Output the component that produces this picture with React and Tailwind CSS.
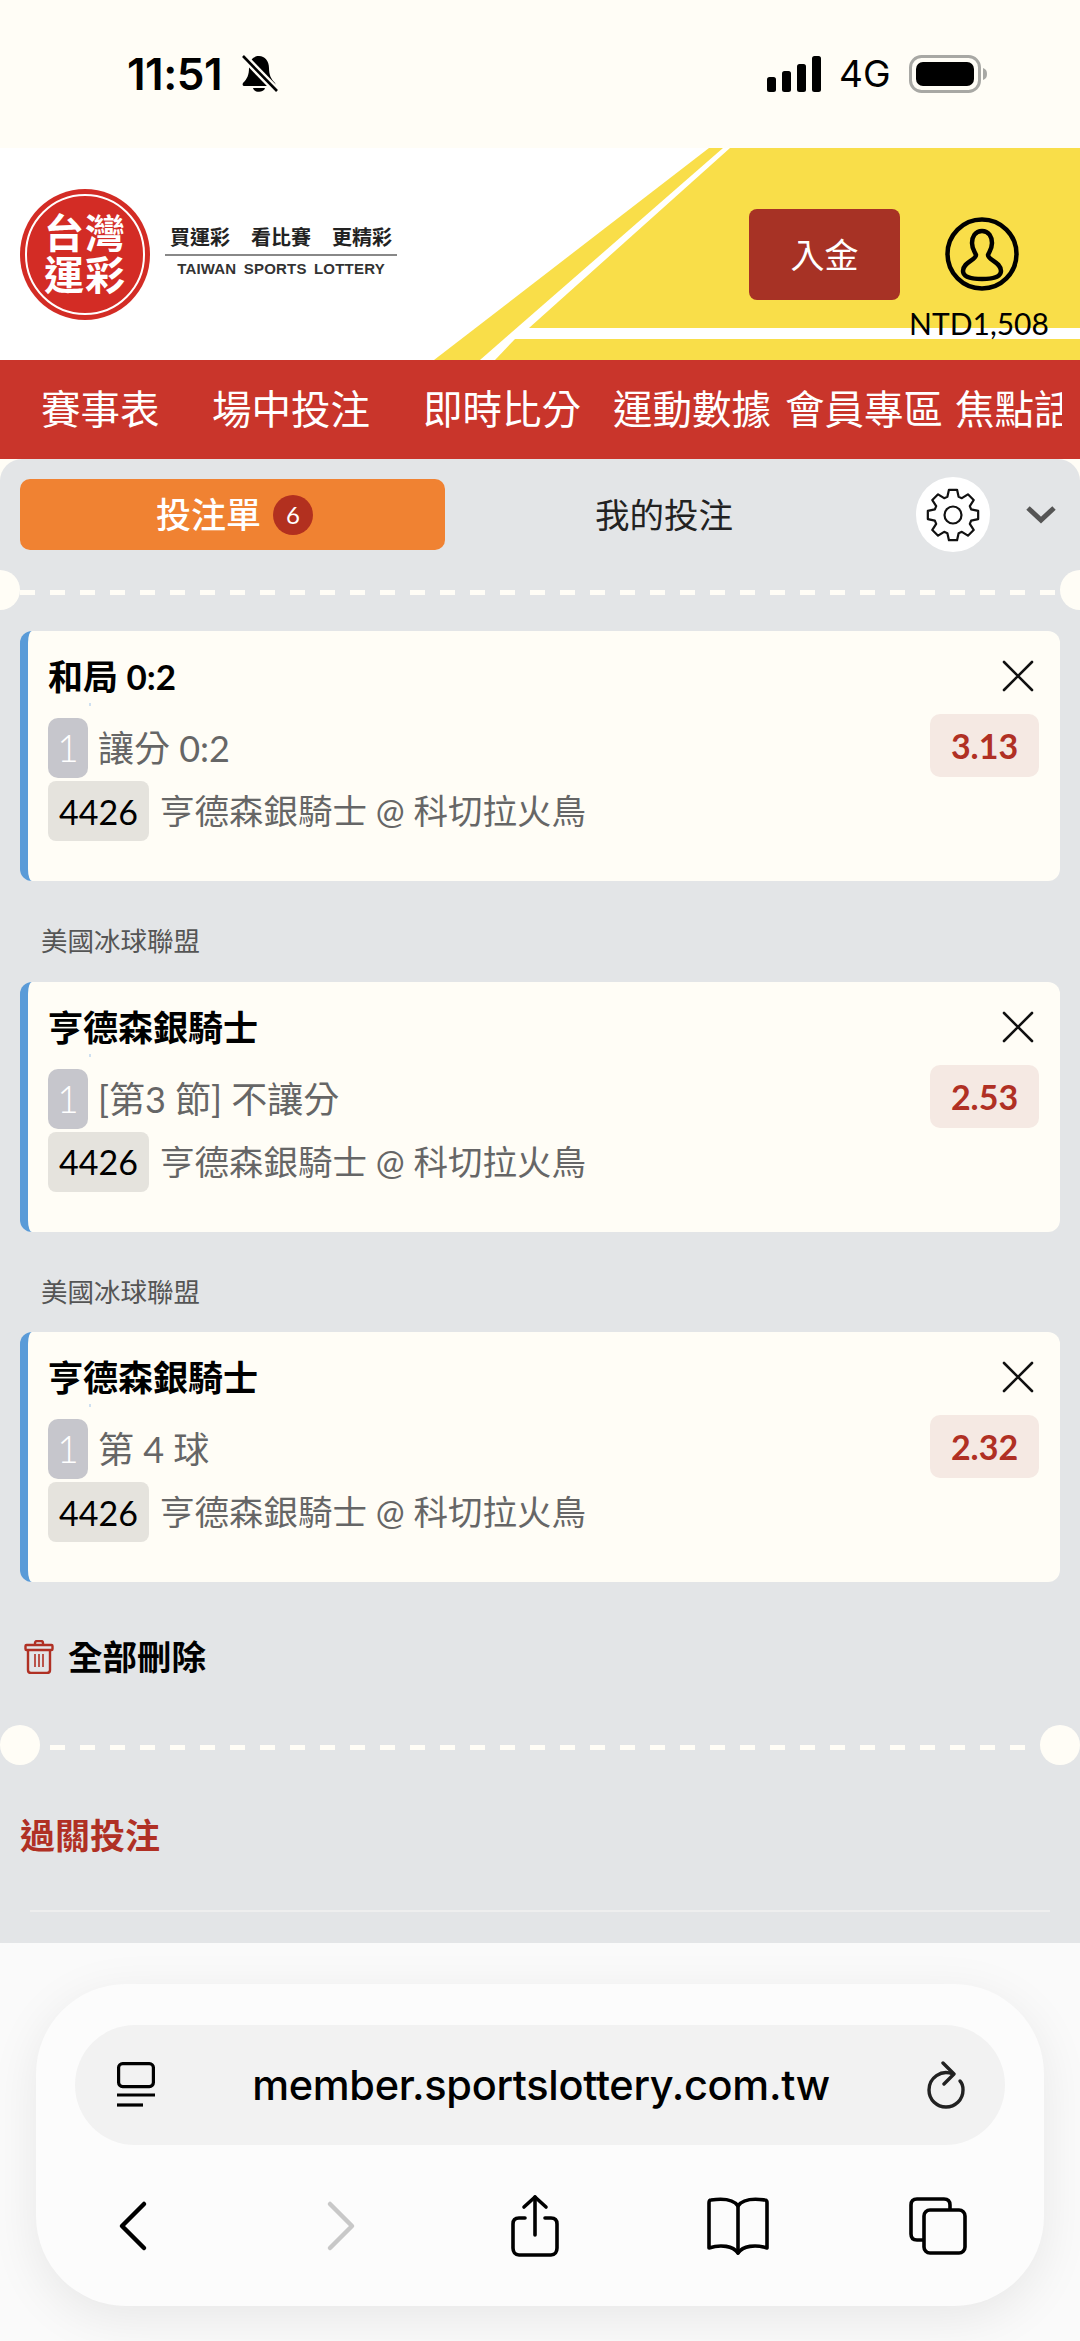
import React from 'react';

const legs = [
  { title: '和局 0:2', market: '讓分 0:2', odds: '3.13' },
  { title: '亨德森銀騎士', market: '[第3 節] 不讓分', odds: '2.53', league: '美國冰球聯盟' },
  { title: '亨德森銀騎士', market: '第 4 球', odds: '2.32', league: '美國冰球聯盟' },
];

// 8 tooth cog outline around the centre of a 60 box
const gearPath = () => {
  const pts = [];
  for (let i = 0; i < 8; i++) {
    const a = (i * Math.PI) / 4 - Math.PI / 2;
    [[-0.3, 19], [-0.16, 25.5], [0.16, 25.5], [0.3, 19]].forEach(([off, r]) => {
      pts.push(`${(30 + r * Math.cos(a + off)).toFixed(2)} ${(30 + r * Math.sin(a + off)).toFixed(2)}`);
    });
  }
  return `M${pts.join(' L')}Z`;
};

const GearIcon = () => (
  <svg width="60" height="60" viewBox="0 0 60 60" fill="none" stroke="#111" strokeWidth="2.2" strokeLinejoin="round">
    <path d={gearPath()} />
    <circle cx="30" cy="30" r="8.5" />
  </svg>
);

const CloseIcon = () => (
  <svg width="32" height="32" viewBox="0 0 32 32" fill="none" stroke="#111" strokeWidth="2.6" strokeLinecap="round">
    <path d="M2 2 L30 30 M30 2 L2 30" />
  </svg>
);

const LegCard = ({ title, market, odds }) => (
  <div className="relative h-[250px] mx-[20px] bg-[#fffdf6] rounded-[12px] border-l-[8px] border-[#5a9bd8] pl-[20px] pr-[21px] pt-[23px]">
    <div className="flex items-center justify-between h-[44px]">
      <span className="text-[35px] leading-[44px] font-bold text-black">{title}</span>
      <span className="mr-[5px]"><CloseIcon /></span>
    </div>
    <div className="absolute left-[61px] top-[72px] w-[2px] h-[3px] bg-[#cfe0f0]" />
    <div className="flex items-end justify-between h-[64px] mt-[16px]">
      <div className="flex items-center">
        <span className="w-[40px] h-[60px] rounded-[10px] bg-[#c6c6cc] text-white text-[37px] font-light flex items-center justify-center">1</span>
        <span className="ml-[10px] text-[36px] leading-[60px] text-[#666]">{market}</span>
      </div>
      <span className="w-[109px] h-[63px] mb-[1px] rounded-[10px] bg-[#f5e9e3] text-[#b03024] text-[34px] font-bold flex items-center justify-center">{odds}</span>
    </div>
    <div className="flex items-center mt-[3px]">
      <span className="w-[101px] h-[60px] rounded-[8px] bg-[#e5e3dd] text-black text-[34px] flex items-center justify-center">4426</span>
      <span className="ml-[11px] text-[34.5px] leading-[60px] text-[#666]">亨德森銀騎士 @ 科切拉火鳥</span>
    </div>
  </div>
);

const Divider = ({ full }) => (
  <div className="relative h-[40px]">
    <div className={full
      ? 'absolute left-[50px] right-[50px] top-[20px] h-[5px] bg-[repeating-linear-gradient(90deg,#fffdf6_0_15px,transparent_15px_30px)]'
      : 'absolute left-[20px] right-[20px] top-[20px] h-[5px] bg-[repeating-linear-gradient(90deg,#fffdf6_0_15px,transparent_15px_30px)]'} />
    <div className={full ? 'absolute left-0 top-0 w-[40px] h-[40px] rounded-full bg-[#fffdf6]' : 'absolute left-[-20px] top-0 w-[40px] h-[40px] rounded-full bg-[#fffdf6]'} />
    <div className={full ? 'absolute right-0 top-0 w-[40px] h-[40px] rounded-full bg-[#fffdf6]' : 'absolute right-[-20px] top-0 w-[40px] h-[40px] rounded-full bg-[#fffdf6]'} />
  </div>
);

const StatusBar = () => (
  <div className="h-[148px] bg-[#fffdf6] flex items-center font-['Inter',sans-serif]">
    <span className="ml-[127px] w-[102px] text-[44px] font-semibold tracking-[-0.5px] text-black whitespace-nowrap">11:51</span>
    <svg className="ml-[11px]" width="38" height="38" viewBox="0 0 38 38">
      <path d="M19 1 C13 1 9 6 9 13 C9 20 7 24 3 28 C2 30 3 31 5 31 L33 31 C35 31 36 30 35 28 C31 24 29 20 29 13 C29 6 25 1 19 1Z" fill="#000" />
      <path d="M13 33 C14 38 24 38 25 33Z" fill="#000" />
      <path d="M3 1 L37 36" stroke="#fffdf6" strokeWidth="7.5" />
      <path d="M3 1 L37 36" stroke="#000" strokeWidth="2.6" />
    </svg>
    <svg className="ml-[489px]" width="54" height="36" viewBox="0 0 54 36" fill="#000">
      <rect x="0" y="21" width="9" height="15" rx="2.5" />
      <rect x="15" y="15" width="9" height="21" rx="2.5" />
      <rect x="30" y="8" width="9" height="28" rx="2.5" />
      <rect x="45" y="0" width="9" height="36" rx="2.5" />
    </svg>
    <span className="ml-[18px] text-[37px] font-normal text-black">4G</span>
    <svg className="ml-[18px]" width="80" height="38" viewBox="0 0 80 38">
      <rect x="1.5" y="1.5" width="69" height="35" rx="11" fill="none" stroke="#a8a8a4" strokeWidth="3" />
      <rect x="7" y="7" width="58" height="24" rx="7" fill="#000" />
      <path d="M74 13 C77 14 78 16 78 19 C78 22 77 24 74 25Z" fill="#a8a8a4" />
    </svg>
  </div>
);

const SiteHeader = () => (
  <div className="relative h-[212px] bg-white flex items-center overflow-hidden">
    <svg className="absolute inset-0" width="1080" height="212" viewBox="0 0 1080 212">
      <path d="M709 0 L723 0 L480 212 L434 212Z" fill="#f9de49" />
      <path d="M730 0 L1080 0 L1080 180 L529 180Z" fill="#f9de49" />
      <path d="M515 191 L1080 191 L1080 212 L495 212Z" fill="#f9de49" />
    </svg>
    <div className="relative ml-[20px] w-[130px] h-[131px] rounded-full bg-[#d32c25] flex flex-col items-center justify-center text-white font-bold text-[40px] leading-[42px] tracking-[1px]">
      <div className="absolute inset-[5px] rounded-full border-2 border-white" />
      <span>台灣</span>
      <span>運彩</span>
    </div>
    <div className="relative ml-[15px] w-[232px] flex flex-col items-center mt-[-6px] font-['Liberation_Sans','Noto_Sans_CJK_TC',sans-serif]">
      <div className="flex gap-[21px] text-[20px] leading-[24px] font-bold text-[#222]">
        <span>買運彩</span><span>看比賽</span><span>更精彩</span>
      </div>
      <div className="w-full h-[2px] bg-[#888] mt-[4px]" />
      <span className="mt-[5px] text-[15px] leading-[16px] font-bold text-[#333] [word-spacing:3px] tracking-[0.2px] whitespace-nowrap">TAIWAN SPORTS LOTTERY</span>
    </div>
    <button className="relative ml-[352px] w-[151px] h-[91px] rounded-[8px] bg-[#a73225] text-white text-[34px]">入金</button>
    <div className="relative ml-[45px] w-[74px] h-[74px]">
      <svg width="74" height="74" viewBox="0 0 74 74" fill="none" stroke="#000" strokeWidth="4.5">
        <circle cx="37" cy="37" r="34.5" />
        <path d="M37 14 C30 14 27 20 27 26 C27 32 30 35 31 38 C31 43 18 45 18 54 C18 60 25 62 37 62 C49 62 56 60 56 54 C56 45 43 43 43 38 C44 35 47 32 47 26 C47 20 44 14 37 14Z" />
      </svg>
      <span className="absolute left-[34px] -translate-x-1/2 top-[88px] text-[30px] leading-[36px] text-black whitespace-nowrap">NTD1,508</span>
    </div>
  </div>
);

const SiteNav = () => (
  <div className="h-[99px] w-[1080px] bg-[#c9352b]">
    <div className="h-full w-[1062px] overflow-hidden flex items-center pb-[2px] text-white text-[39.5px] whitespace-nowrap">
      <span className="ml-[41px]">賽事表</span>
      <span className="ml-[52.5px]">場中投注</span>
      <span className="ml-[53px]">即時比分</span>
      <span className="ml-[32px]">運動數據</span>
      <span className="ml-[14px]">會員專區</span>
      <span className="ml-[12px]">焦點話題</span>
    </div>
  </div>
);

const BetSlip = () => (
  <div className="h-[1484px] bg-[#e3e5e7] rounded-t-[22px] pt-[20px] overflow-hidden">
    <div className="flex items-center h-[71px]">
      <div className="ml-[20px] w-[425px] h-[71px] rounded-[10px] bg-[#f08232] flex items-center justify-center gap-[12px] pl-[4px] text-white text-[35px] font-medium">
        <span>投注單</span>
        <span className="w-[40px] h-[40px] rounded-full bg-[#b2301f] text-[24px] font-normal flex items-center justify-center">6</span>
      </div>
      <span className="w-[438px] text-center text-[34.5px] text-[#222]">我的投注</span>
      <div className="ml-[33px] w-[74px] h-[75px] rounded-full bg-white flex items-center justify-center">
        <GearIcon />
      </div>
      <svg className="ml-[36px]" width="30" height="18" viewBox="0 0 30 18" fill="none" stroke="#555" strokeWidth="5">
        <path d="M2 2 L15 14 L28 2" />
      </svg>
    </div>
    <div className="mt-[20px]"><Divider /></div>
    <div className="mt-[21px]">
      {legs.map((leg, i) => (
        <div key={i}>
          {leg.league && (
            <div className="h-[100.5px] pl-[41px] flex items-center pt-[22px] text-[26.5px] text-[#555]">{leg.league}</div>
          )}
          <LegCard {...leg} />
        </div>
      ))}
    </div>
    <div className="flex items-center h-[40px] mt-[55px] ml-[24px]">
      <svg width="30" height="34" viewBox="0 0 30 34" fill="none" stroke="#b03024" strokeWidth="2.4">
        <path d="M11 5 V3 C11 2 12 1 13 1 H17 C18 1 19 2 19 3 V5" />
        <rect x="1.5" y="5" width="27" height="5" rx="1" />
        <path d="M4 10 V30 C4 32 5 33 7 33 H23 C25 33 26 32 26 30 V10" />
        <path d="M11 14 V27 M15 14 V27 M19 14 V27" strokeWidth="1.6" />
      </svg>
      <span className="ml-[14px] text-[34.5px] leading-[40px] font-bold text-black">全部刪除</span>
    </div>
    <div className="mt-[48px]"><Divider full /></div>
    <div className="mt-[50px] ml-[20px] text-[35px] leading-[40px] font-bold text-[#b03024]">過關投注</div>
    <div className="mt-[55px] mx-[30px] h-[2px] bg-[#eeeeee]" />
  </div>
);

const BrowserBar = () => (
  <div className="h-[398px] bg-[#fafafa] pt-[41px] px-[36px]">
    <div className="h-[322px] rounded-[90px] bg-[#fcfcfc] shadow-[0_12px_50px_rgba(0,0,0,0.08)] pt-[41px] font-['Inter',sans-serif]">
      <div className="mx-[39px] h-[120px] rounded-[60px] bg-[#f2f2f2] flex items-center">
        <svg className="ml-[42px]" width="38" height="46" viewBox="0 0 38 46" fill="none" stroke="#000" strokeWidth="3.2">
          <rect x="1.6" y="1.6" width="34.8" height="23" rx="4" />
          <path d="M0 33 H38" />
          <path d="M0 43 H26" />
        </svg>
        <span className="ml-[97px] w-[578px] text-center text-[41.5px] font-medium tracking-[-0.3px] text-black whitespace-nowrap">member.sportslottery.com.tw</span>
        <svg className="ml-[96px]" width="40" height="48" viewBox="0 0 40 48" fill="none" stroke="#222" strokeWidth="3.4" strokeLinecap="round" strokeLinejoin="round">
          <path d="M27 13 C15 8 3 17 3 29 C3 39 11 46 20 46 C29 46 37 39 37 29 C37 25 36 22 34 20" />
          <path d="M17 2 L28 13 L18 23" />
        </svg>
      </div>
      <div className="flex items-center justify-between h-[161px] pl-[66px] pr-[76px]">
        <svg width="60" height="60" viewBox="0 0 60 60" fill="none" stroke="#000" strokeWidth="4.5" strokeLinecap="round" strokeLinejoin="round">
          <path d="M42 8 L20 30 L42 52" />
        </svg>
        <svg className="translate-x-[3px]" width="60" height="60" viewBox="0 0 60 60" fill="none" stroke="#c8c8c8" strokeWidth="4.5" strokeLinecap="round" strokeLinejoin="round">
          <path d="M24 8 L46 30 L24 52" />
        </svg>
        <svg className="translate-x-[1px]" width="60" height="64" viewBox="0 0 60 64" fill="none" stroke="#000" strokeWidth="3.6" strokeLinecap="round" strokeLinejoin="round">
          <path d="M30 3 V41" />
          <path d="M19 13 L30 3 L41 13" />
          <path d="M20 24 H14 C10 24 8 26 8 30 V54 C8 58 10 61 14 61 H46 C50 61 52 58 52 54 V30 C52 26 50 24 46 24 H40" />
        </svg>
        <svg className="translate-x-[2px]" width="62" height="60" viewBox="0 0 62 60" fill="none" stroke="#000" strokeWidth="3.6" strokeLinecap="round" strokeLinejoin="round">
          <path d="M31 10 C27 4 18 2 4 4 C2 4 2 6 2 7 V52 C14 48 26 50 31 57 C36 50 48 48 60 52 V7 C60 6 60 4 58 4 C44 2 35 4 31 10Z" />
          <path d="M31 10 V57" />
        </svg>
        <svg width="60" height="60" viewBox="0 0 60 60" fill="none" stroke="#000" strokeWidth="3.6" strokeLinejoin="round">
          <path d="M42 14 V9 C42 5 40 3 36 3 H9 C5 3 3 5 3 9 V38 C3 42 5 44 9 44 H16" />
          <rect x="16" y="14" width="41" height="43" rx="6" />
        </svg>
      </div>
    </div>
  </div>
);

export default function App() {
  return (
    <div className="w-[1080px] h-[2341px] overflow-hidden bg-[#fffdf6] font-['Lato','Noto_Sans_CJK_TC',sans-serif]">
      <StatusBar />
      <SiteHeader />
      <SiteNav />
      <BetSlip />
      <BrowserBar />
    </div>
  );
}
